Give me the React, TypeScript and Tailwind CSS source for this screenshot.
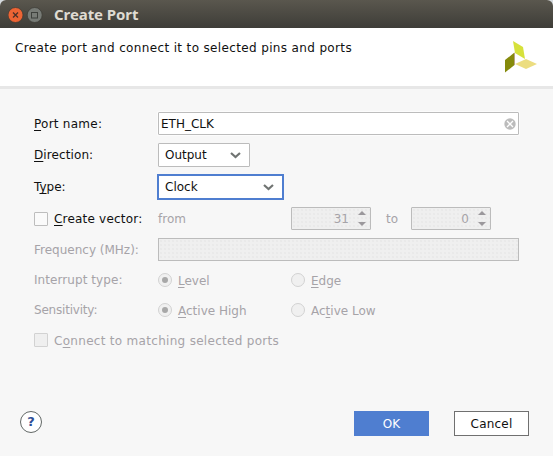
import type { ReactNode } from "react";

const U = ({ children }: { children: ReactNode }) => (
  <span className="underline decoration-1 underline-offset-2 [text-decoration-skip-ink:none]">{children}</span>
);

function Chevron() {
  return (
    <svg width="11" height="7" viewBox="0 0 11 7" fill="none" stroke="#707472" strokeWidth="2.2">
      <path d="M1 1 L5.5 5 L10 1" />
    </svg>
  );
}

const DOTS = "bg-[#efefef] bg-[radial-gradient(#e9e9e9_0.7px,transparent_0.8px)] bg-[size:4px_4px]";

function Spinner({ value }: { value: string }) {
  return (
    <div className={`flex h-[23px] w-20 items-center justify-end rounded-[1px] border border-[#bcbcbc] pr-1 text-[#a6a3a8] ${DOTS}`}>
      <span className="mr-[9px]">{value}</span>
      <svg width="8" height="17" viewBox="0 0 8 17" fill="#9b989c" className="shrink-0">
        <path d="M0 5 L4 1 L8 5Z M0 12 L4 16 L8 12Z" />
      </svg>
    </div>
  );
}

function Radio({ checked, children }: { checked?: boolean; children: ReactNode }) {
  return (
    <div className="flex w-[133px] items-center">
      <span className="mr-[6px] flex size-[14px] items-center justify-center rounded-full border border-[#d2d2d2] bg-[#f0f0f0]">
        {checked && <span className="size-[6px] rounded-full bg-[#a8a8a8]" />}
      </span>
      <span className="pt-[2px]">{children}</span>
    </div>
  );
}

function Label({ children }: { children: ReactNode }) {
  return <div className="w-[124px] shrink-0">{children}</div>;
}

export default function App() {
  return (
    <div className="h-[456px] w-[553px] overflow-hidden whitespace-nowrap bg-[#d5dbdf] font-['DejaVu_Sans',sans-serif] text-[12px] leading-[14px] text-[#101010]">
      <div className="flex h-full flex-col overflow-hidden rounded-t-[6px] bg-[#f7f7f7]">
        <header className="flex h-7 items-center bg-linear-to-b from-[#5a574e] to-[#3e3d38] pl-2">
          <svg width="36" height="18" viewBox="0 0 36 18" fill="none" className="mt-px">
            <circle cx="7.5" cy="9" r="7.5" fill="#ed6434" stroke="#3b3934" strokeWidth=".7" />
            <path d="M5 6.5 L10 11.5 M10 6.5 L5 11.5" stroke="#4c3028" strokeWidth="1.3" />
            <circle cx="26.7" cy="9" r="7.5" fill="#777b76" stroke="#3b3934" strokeWidth=".7" />
            <rect x="23.5" y="6.5" width="6" height="5.5" stroke="#3d403c" />
          </svg>
          <h1 className="ml-[10px] font-['Noto_Sans',sans-serif] text-[15px] font-bold leading-5 tracking-[-0.08px] text-[#dfdbd2]">Create Port</h1>
        </header>
        <section className="flex h-[61px] justify-between border-b-[3px] border-[#e7e7e7] bg-white pl-[15px] pr-4">
          <p className="pt-[13px] tracking-[0.355px]">Create port and connect it to selected pins and ports</p>
          <svg width="32" height="32" viewBox="0 0 32 32" className="mt-[13px]">
            <path d="M8 0 L18 6 L20 18 L10 12Z" fill="#d6e13b" />
            <path d="M0 19 L9.5 11.5 V24 L0 31.5Z" fill="#858a0b" />
            <path d="M10 23 L21 18 L32 23 L21 28Z" fill="#ecdd80" />
            <path d="M9.5 12 V24" stroke="#b99c88" strokeWidth=".8" />
          </svg>
        </section>
        <main className="flex flex-col pl-[34px] pt-[23px]">
          <div className="flex h-[23px] items-center">
            <Label><span className="tracking-[0.25px]"><U>P</U>ort name:</span></Label>
            <div className="flex h-[23px] w-[361px] items-center justify-between rounded-[1px] border border-[#bcbcbc] bg-white pl-[2px] pr-[2px] shadow-[0_0_0_1px_#fcfcfc]">
              <span>ETH_CLK</span>
              <svg width="12" height="12" viewBox="0 0 12 12">
                <circle cx="6" cy="6" r="5.7" fill="#bcbcbc" />
                <path d="M3 3 L9 9 M9 3 L3 9" stroke="#fff" strokeWidth="1.3" />
              </svg>
            </div>
          </div>
          <div className="mt-2 flex h-6 items-center">
            <Label><span className="tracking-[0.1px]"><U>D</U>irection:</span></Label>
            <div className="flex h-6 w-[92px] items-center justify-between rounded-[1px] border border-[#bcbcbc] bg-white pl-[6px] pr-2">
              <span>Output</span><Chevron />
            </div>
          </div>
          <div className="mt-[7px] flex h-[26px] items-center">
            <Label>T<U>y</U>pe:</Label>
            <div className="-ml-px flex h-[26px] w-[127px] items-center justify-between border-2 border-[#4f7ed0] bg-white pl-[6px] pr-2">
              <span>Clock</span><Chevron />
            </div>
          </div>
          <div className="mt-[7px] flex h-[23px] items-center">
            <span className="mr-[6px] size-[14px] rounded-[1px] border border-[#bdbdbd] bg-[#fafafa]" />
            <div className="w-[104px] tracking-[0.2px]"><U>C</U>reate vector:</div>
            <div className="w-[133px] text-[#a6a3a8]">from</div>
            <Spinner value="31" />
            <div className="w-10 pl-[15px] text-[#a6a3a8]">to</div>
            <Spinner value="0" />
          </div>
          <div className="mt-2 flex h-[23px] items-center text-[#a6a3a8]">
            <Label>Frequency (MHz):</Label>
            <div className={`h-[23px] w-[361px] border border-[#bcbcbc] ${DOTS}`} />
          </div>
          <div className="mt-[11px] flex h-4 items-center text-[#a6a3a8]">
            <Label><span className="tracking-[0.07px]">Interrupt type:</span></Label>
            <Radio checked><U>L</U>evel</Radio>
            <Radio><U>E</U>dge</Radio>
          </div>
          <div className="mt-[14px] flex h-4 items-center text-[#a6a3a8]">
            <Label><span className="tracking-[-0.2px]">Sensitivity:</span></Label>
            <Radio checked><U>A</U>ctive High</Radio>
            <Radio>Ac<U>t</U>ive Low</Radio>
          </div>
          <div className="mt-[14px] flex h-4 items-center text-[#a6a3a8]">
            <span className="mr-[6px] size-[14px] rounded-[1px] border border-[#d2d2d2] bg-[#efefef]" />
            <span className="pt-px tracking-[0.3px]">C<U>o</U>nnect to matching selected ports</span>
          </div>
        </main>
        <footer className="mt-auto flex h-[45px] items-start pl-5 pr-6">
          <button className="flex size-[22px] items-center justify-center rounded-full border border-[#626866] bg-white text-[13px] font-bold text-[#2e4e96]">?</button>
          <button className="ml-auto h-[25px] w-[75px] bg-[#4f7ed0] text-white">OK</button>
          <button className="ml-[25px] h-[25px] w-[75px] border border-[#707070] bg-white tracking-[0.2px]">Cancel</button>
        </footer>
      </div>
    </div>
  );
}
